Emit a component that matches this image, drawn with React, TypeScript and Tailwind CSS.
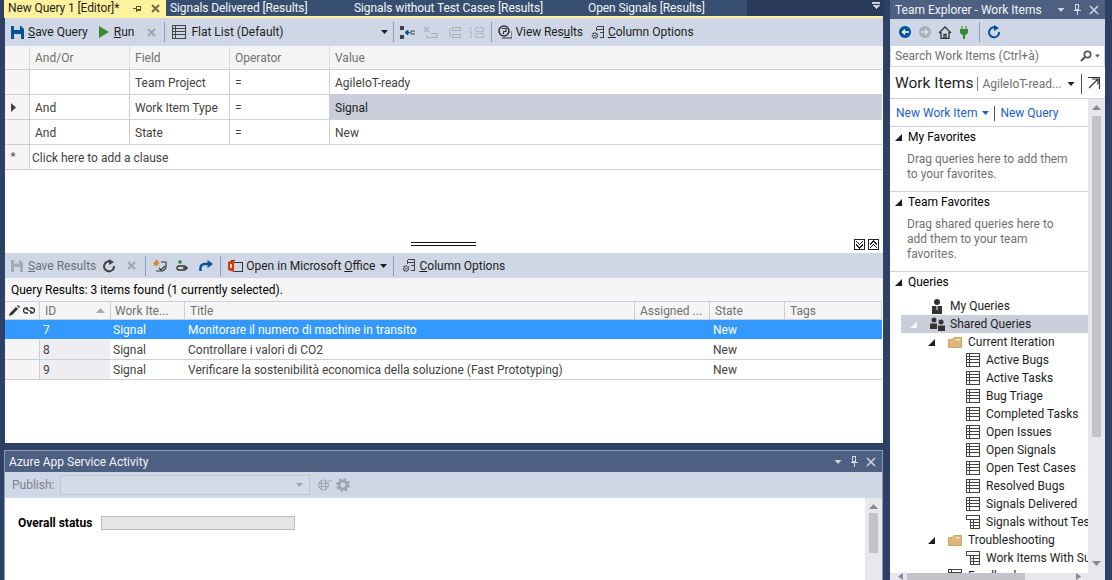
import React from 'react';

const GridIcon = () => (
  <svg width="14" height="14" viewBox="0 0 14 14" shapeRendering="crispEdges" className="shrink-0">
    <path d="M.5.5h13v13H.5zM.5 3.500h13M.5 6.500h13M.5 9.500h13M3.500.5v13" fill="none" stroke="#424242" />
  </svg>
);

const LinkedGridIcon = () => (
  <svg width="14" height="14" viewBox="0 0 14 14" shapeRendering="crispEdges" className="shrink-0">
    <path d="M.5.5h13v13H4.500V4.500H.5zM4.500 4.500h9M4.500 7.500h9M4.500 10.500h9M7.500 4.500v9" fill="none" stroke="#424242" />
  </svg>
);

const Folder = () => (
  <svg width="14" height="12" viewBox="0 0 14 12" className="shrink-0">
    <path d="M.5 3.500V11.500H13.500V1.500H6L4.500 3.500z" fill="#dcb67a" stroke="#c9a667" />
    <path d="M2 4.500h5l1.500-1.500H12v1.500" fill="#f3e3c3" />
  </svg>
);

const Caret = ({ tone = '#1e1e1e' }: { tone?: string }) => (
  <svg width="7" height="7" viewBox="0 0 7 7" className="shrink-0">
    <path d="M7 0v7H0z" fill={tone} />
  </svg>
);

const DownArrow = ({ tone = '#1e1e1e', w = 7 }: { tone?: string; w?: number }) => (
  <svg width={w} height="4" viewBox="0 0 7 4" className="shrink-0">
    <path d="M0 0h7L3.500 4z" fill={tone} />
  </svg>
);

const Sep = () => <div className="mx-[4px] h-[20px] w-px bg-[#8f9bb0]" />;

const ColumnIcon = () => (
  <svg width="14" height="15" viewBox="0 0 14 15" className="shrink-0">
    <path d="M5.500 1.500h7v11h-4M5.500 1.500v4M5.500 4.500h7M8.500 7.500h4" fill="none" stroke="#424242" shapeRendering="crispEdges" />
    <circle cx="4" cy="10.500" r="2.500" fill="none" stroke="#424242" strokeWidth="1.600" strokeDasharray="1.500 0.700" />
    <circle cx="4" cy="10.500" r="0.800" fill="#424242" />
  </svg>
);

const CloseX = ({ tone = '#a0a4ad' }: { tone?: string }) => (
  <svg width="9" height="9" viewBox="0 0 9 9" className="shrink-0">
    <path d="M1 1l7 7M8 1L1 8" stroke={tone} strokeWidth="2" />
  </svg>
);

const Refresh = ({ tone = '#424242' }: { tone?: string }) => (
  <svg width="14" height="14" viewBox="0 0 14 14" className="shrink-0">
    <path d="M8.500 2.600A5 5 0 1 0 12 7" fill="none" stroke={tone} strokeWidth="2" />
    <path d="M7 0l5 3-5 3z" fill={tone} />
  </svg>
);

const Pin = () => (
  <svg width="8" height="11" viewBox="0 0 8 11" shapeRendering="crispEdges" className="shrink-0">
    <path d="M2.500.5h3v5h-3zM.5 6.500h7M4 7v4" fill="none" stroke="#d5dbe8" />
    <path d="M5 1h1v5H5z" fill="#d5dbe8" />
  </svg>
);

const PanelControls = () => (
  <div className="flex items-center gap-[8px]">
    <DownArrow tone="#ced4dd" w={8} />
    <Pin />
    <svg width="10" height="10" viewBox="0 0 10 10" className="shrink-0">
      <path d="M1 1l8 8M9 1L1 9" stroke="#ced4dd" strokeWidth="1.600" />
    </svg>
  </div>
);

const PersonIcon = () => (
  <svg width="14" height="15" viewBox="0 0 14 15" className="shrink-0">
    <circle cx="7" cy="3" r="3" fill="#333" />
    <path d="M2 7h10v8H2z" fill="#333" />
    <path d="M6.500 7h1v4h-1z" fill="#fff" />
  </svg>
);

const PeopleIcon = () => (
  <svg width="15" height="14" viewBox="0 0 15 14" className="shrink-0">
    <circle cx="4" cy="3" r="2.500" fill="#333" />
    <circle cx="11" cy="5" r="2.500" fill="#333" />
    <path d="M0 6.500h7V12H0zM8 8.500h7V14H8z" fill="#333" />
  </svg>
);

const clauses = [
  { andOr: '', field: 'Team Project', value: 'AgileIoT-ready', marker: false, active: false },
  { andOr: 'And', field: 'Work Item Type', value: 'Signal', marker: true, active: true },
  { andOr: 'And', field: 'State', value: 'New', marker: false, active: false },
];

const results = [
  { id: '7', title: 'Monitorare il numero di machine in transito', selected: true },
  { id: '8', title: 'Controllare i valori di CO2', selected: false },
  { id: '9', title: 'Verificare la sostenibilità economica della soluzione (Fast Prototyping)', selected: false },
];

const queries = [
  'Active Bugs',
  'Active Tasks',
  'Bug Triage',
  'Completed Tasks',
  'Open Issues',
  'Open Signals',
  'Open Test Cases',
  'Resolved Bugs',
  'Signals Delivered',
];

function TopTabs() {
  return (
    <div className="flex h-[16px] shrink-0 items-stretch text-[12px] leading-[16px] tracking-[-0.1px] text-[#f4f6f9]">
      <div className="ml-[4px] flex w-[162px] items-center bg-[#fff29d] pl-[4px] text-[#1e1e1e]">
        <span>New Query 1 [Editor]*</span>
        <div className="ml-auto flex items-center gap-[9px] pr-[6px]">
          <svg width="9" height="7" viewBox="0 0 9 7" shapeRendering="crispEdges">
            <path d="M0 3.500h3M3.500.5v6M3.500 1.500h4v4h-4M3.500 4.500h4" fill="none" stroke="#5d5a35" />
          </svg>
          <CloseX tone="#6f6c45" />
        </div>
      </div>
      <div className="flex w-[581px] bg-[#364e6f]">
        <div className="w-[184px] pl-[4px]">Signals Delivered [Results]</div>
        <div className="w-[234px] pl-[4px]">Signals without Test Cases [Results]</div>
        <div className="pl-[4px]">Open Signals [Results]</div>
      </div>
      <div className="flex flex-1 justify-end bg-[#2a3a5a] pr-[4px] pt-[2px]">
        <svg width="8" height="7" viewBox="0 0 8 7" shapeRendering="crispEdges">
          <path d="M0 0h8v1.500H0zM0 3h8L4 7z" fill="#ced4dd" />
        </svg>
      </div>
    </div>
  );
}

function QueryToolbar() {
  return (
    <div className="flex h-[28px] shrink-0 items-center bg-[#cfd6e5] pl-[6px] text-[12px] text-[#1e1e1e]">
      <svg width="13" height="13" viewBox="0 0 13 13" className="shrink-0">
        <path d="M0 0h10l3 3v10H0z" fill="#00539c" />
        <path d="M3 0h6v4H3z" fill="#cfd6e5" />
        <path d="M3 8h7v5H3z" fill="#cfd6e5" />
      </svg>
      <span className="ml-[4px]"><u>S</u>ave Query</span>
      <svg width="10" height="12" viewBox="0 0 10 12" className="ml-[11px] shrink-0">
        <path d="M0 0l10 6-10 6z" fill="#388a34" />
      </svg>
      <span className="ml-[5px]"><u>R</u>un</span>
      <div className="ml-[13px]"><CloseX /></div>
      <div className="ml-[4px]"><Sep /></div>
      <div className="ml-[3px]"><GridIcon /></div>
      <span className="ml-[5px]">Flat List (Default)</span>
      <div className="ml-[97px]"><DownArrow /></div>
      <div className="ml-[1px]"><Sep /></div>
      <svg width="16" height="13" viewBox="0 0 16 13" className="ml-[2px] shrink-0">
        <path d="M0 0h4v4H0zM0 9h4v4H0z" fill="#424242" />
        <path d="M5 6.500h5M5 6.500l3-2.500v5z" fill="#00539c" stroke="#00539c" />
        <path d="M11 5h4M11 8h4M11 5v3" fill="none" stroke="#424242" />
      </svg>
      <svg width="14" height="13" viewBox="0 0 14 13" className="ml-[8px] shrink-0">
        <path d="M0 1l5 5M5 1L0 6M7 7.500h6v4H3V9" fill="none" stroke="#a9afba" strokeWidth="1.200" />
      </svg>
      <svg width="14" height="13" viewBox="0 0 14 13" className="ml-[9px] shrink-0">
        <path d="M5.500 1.500h8v3h-8zM5.500 8.500h8v3h-8zM3 2v9" fill="none" stroke="#a9afba" />
      </svg>
      <svg width="15" height="13" viewBox="0 0 15 13" className="ml-[8px] shrink-0">
        <path d="M6.500 1.500h8v4h-8zM6.500 7.500h8v4h-8zM2 1v11" fill="none" stroke="#a9afba" strokeDasharray="3 1" />
      </svg>
      <div className="ml-[3px]"><Sep /></div>
      <svg width="14" height="14" viewBox="0 0 14 14" className="ml-[2px] shrink-0">
        <circle cx="6" cy="6" r="5" fill="none" stroke="#333" strokeWidth="1.600" />
        <path d="M4 3.500h4v3H5.500V9" fill="none" stroke="#333" strokeWidth="1.200" />
        <path d="M4 13h10V6" fill="none" stroke="#333" />
      </svg>
      <span className="ml-[4px] tracking-[-0.1px]">View Res<u>u</u>lts</span>
      <div className="ml-[8px]"><ColumnIcon /></div>
      <span className="ml-[3px]"><u>C</u>olumn Options</span>
    </div>
  );
}

function ClauseGrid() {
  return (
    <div className="mr-[1px] shrink-0 text-[12px] text-[#424242]">
      <div className="flex h-[24px] items-center border-b border-[#cccedb] bg-[#f5f5f5] text-[#717171]">
        <div className="h-full w-[25px] shrink-0 border-r border-[#dcdce4]" />
        <div className="flex h-full w-[100px] shrink-0 items-center border-r border-[#dcdce4] pl-[5px]">And/Or</div>
        <div className="flex h-full w-[100px] shrink-0 items-center border-r border-[#dcdce4] pl-[5px]">Field</div>
        <div className="flex h-full w-[100px] shrink-0 items-center border-r border-[#dcdce4] pl-[5px]">Operator</div>
        <div className="pl-[5px]">Value</div>
      </div>
      {clauses.map((c) => (
        <div key={c.field} className="flex h-[25px] items-stretch border-b border-[#cccedb]">
          <div className="flex w-[25px] shrink-0 items-center justify-center border-r border-[#cccedb] bg-[#f5f5f5] pr-[8px]">
            {c.marker && (
              <svg width="5" height="9" viewBox="0 0 5 9">
                <path d="M0 0l5 4.500-5 4.500z" fill="#424242" />
              </svg>
            )}
          </div>
          <div className="flex w-[100px] shrink-0 items-center border-r border-[#cccedb] pl-[5px] pt-[2px]">{c.andOr}</div>
          <div className="flex w-[100px] shrink-0 items-center border-r border-[#cccedb] pl-[5px] pt-[2px]">{c.field}</div>
          <div className="flex w-[100px] shrink-0 items-center border-r border-[#cccedb] pl-[5px] pt-[2px]">=</div>
          <div className={`flex flex-1 items-center pl-[5px] pt-[2px] ${c.active ? 'bg-[#cacdda] text-[#1e1e1e]' : ''}`}>{c.value}</div>
        </div>
      ))}
      <div className="flex h-[25px] items-stretch border-b border-[#cccedb]">
        <div className="flex w-[25px] shrink-0 items-center justify-center border-r border-[#cccedb] bg-[#f5f5f5] pr-[8px] text-[11px] font-bold text-[#555]">*</div>
        <div className="flex items-center pl-[2px] pt-[2px]">Click here to add a clause</div>
      </div>
    </div>
  );
}

function Splitter() {
  return (
    <div className="flex h-[83px] shrink-0 items-end pb-[3px] pl-[406px] pr-[4px]">
      <div className="mb-[4px] h-[4px] w-[65px] border-y border-[#111]" />
      <div className="ml-auto flex gap-[3px]">
        {['M1.500 1.500l3 3 3-3M1.500 4.500l3 3 3-3', 'M1.500 4.500l3-3 3 3M1.500 7.500l3-3 3 3'].map((d) => (
          <svg key={d} width="11" height="11" viewBox="0 0 9 9" shapeRendering="crispEdges">
            <rect x=".5" y=".5" width="8" height="8" fill="#fff" stroke="#222" />
            <path d={d} fill="none" stroke="#222" />
          </svg>
        ))}
      </div>
    </div>
  );
}

function ResultsToolbar() {
  return (
    <div className="flex h-[25px] shrink-0 items-center bg-[#cfd6e5] pl-[6px] text-[12px] text-[#1e1e1e]">
      <svg width="12" height="12" viewBox="0 0 12 12" className="shrink-0">
        <path d="M0 0h9l3 3v9H0z" fill="#a5abb6" />
        <path d="M3 0h5v3.500H3zM3 7h6v5H3z" fill="#cfd6e5" />
      </svg>
      <span className="ml-[5px] text-[#6d6f76]"><u>S</u>ave Results</span>
      <div className="ml-[6px]"><Refresh /></div>
      <div className="ml-[11px]"><CloseX /></div>
      <div className="ml-[5px]"><Sep /></div>
      <svg width="14" height="15" viewBox="0 0 14 15" className="ml-[3px] shrink-0">
        <path d="M3 1l1 2 2-1-1 2 2 1-2 1 1 2-2-1-1 2-1-2-2 1 1-2-1-1 2-1z" fill="#d08a2e" />
        <path d="M3 13h7l3-3V4H8M6 10l2 2 4-4" fill="none" stroke="#333" strokeWidth="1.100" />
      </svg>
      <svg width="14" height="13" viewBox="0 0 14 13" className="ml-[9px] shrink-0">
        <path d="M2 3h4M4 1v4" stroke="#388a34" strokeWidth="1.600" />
        <path d="M3 7h5a2 2 0 0 1 0 4H3a2 2 0 0 1 0-4zM7 9h5" fill="none" stroke="#333" strokeWidth="1.400" />
      </svg>
      <svg width="14" height="12" viewBox="0 0 14 12" className="ml-[9px] shrink-0">
        <path d="M1.500 11V8a4 4 0 0 1 4-4H10" fill="none" stroke="#00539c" strokeWidth="2.400" />
        <path d="M8.500 0L14 4l-5.500 4z" fill="#00539c" />
      </svg>
      <div className="ml-[3px]"><Sep /></div>
      <svg width="15" height="14" viewBox="0 0 15 14" className="ml-[3px] shrink-0">
        <path d="M3.500 3.500h11v9h-9" fill="none" stroke="#333" shapeRendering="crispEdges" />
        <path d="M3 1h4v1H3z" fill="#333" />
        <path d="M0 3l6-2v12l-6-2z" fill="#d83b01" />
        <path d="M2 5h2v4H2z" fill="#f6d9cd" />
      </svg>
      <span className="ml-[3px]">Open in Microsoft <u>O</u>ffice</span>
      <div className="ml-[5px]"><DownArrow /></div>
      <div className="ml-[2px]"><Sep /></div>
      <div className="ml-[4px]"><ColumnIcon /></div>
      <span className="ml-[3px]"><u>C</u>olumn Options</span>
    </div>
  );
}

function ResultsGrid() {
  return (
    <div className="mr-[1px] shrink-0 text-[12px] text-[#424242]">
      <div className="flex h-[19px] items-stretch border-y border-[#cccedb] bg-[#f5f5f5] text-[#717171]">
        <div className="flex w-[35px] shrink-0 items-center gap-[3px] border-r border-[#cccedb] pl-[4px]">
          <svg width="11" height="11" viewBox="0 0 11 11">
            <path d="M0 11l1-3 6-6 2 2-6 6zM8 1l1-1 2 2-1 1z" fill="#333" />
          </svg>
          <svg width="12" height="7" viewBox="0 0 12 7">
            <path d="M5 1H3a2.500 2.500 0 0 0 0 5h2M7 1h2a2.500 2.500 0 0 1 0 5H7M3 2l6 3" fill="none" stroke="#333" strokeWidth="1.300" />
          </svg>
        </div>
        <div className="flex w-[71px] shrink-0 items-center border-r border-[#cccedb] pl-[5px]">
          ID
          <svg width="9" height="5" viewBox="0 0 9 5" className="ml-auto mr-[5px]">
            <path d="M0 5l4.500-5L9 5z" fill="#a9a9ad" />
          </svg>
        </div>
        <div className="flex w-[74px] shrink-0 items-center border-r border-[#cccedb] pl-[4px]">Work Ite...</div>
        <div className="flex w-[450px] shrink-0 items-center border-r border-[#cccedb] pl-[5px]">Title</div>
        <div className="flex w-[75px] shrink-0 items-center border-r border-[#cccedb] pl-[5px]">Assigned ...</div>
        <div className="flex w-[75px] shrink-0 items-center border-r border-[#cccedb] pl-[5px]">State</div>
        <div className="flex flex-1 items-center border-r border-[#cccedb] pl-[5px]">Tags</div>
      </div>
      {results.map((r) => (
        <div
          key={r.id}
          className={`flex h-[20px] items-stretch border-b ${r.selected ? 'border-[#f0f0f4] bg-[#3399ff] text-white' : 'border-[#cccedb]'}`}
        >
          <div className={`w-[35px] shrink-0 border-r ${r.selected ? 'border-[#3399ff]' : 'border-[#cccedb] bg-[#f5f5f5]'}`} />
          <div className={`flex w-[70px] shrink-0 items-center pl-[3px] ${r.selected ? '' : 'bg-[#eeeef2]'}`}>{r.id}</div>
          <div className="flex w-[74px] shrink-0 items-center pl-[3px]">Signal</div>
          <div className="flex w-[525px] shrink-0 items-center pl-[4px]">{r.title}</div>
          <div className="flex items-center pl-[4px]">New</div>
        </div>
      ))}
    </div>
  );
}

function ActivityPanel() {
  return (
    <div className="flex min-h-0 flex-1 flex-col border-x border-t border-[#8b9ab6] bg-white">
      <div className="flex h-[21px] shrink-0 items-center justify-between bg-[#4d6082] pl-[4px] pr-[6px] text-[12px] text-[#f2f4f8]">
        <span>Azure App Service Activity</span>
        <PanelControls />
      </div>
      <div className="flex h-[26px] shrink-0 items-center bg-[#cfd6e5] pl-[7px] text-[12px] text-[#7f838c]">
        <span>Publish:</span>
        <div className="ml-[6px] flex h-[20px] w-[250px] items-center justify-end border border-[#bec6d6] bg-[#d4dae6] pr-[6px]">
          <DownArrow tone="#9ea5b2" />
        </div>
        <svg width="14" height="12" viewBox="0 0 14 12" className="ml-[8px]">
          <circle cx="5.500" cy="6" r="5" fill="none" stroke="#9ea5b2" />
          <path d="M3.500 1v10M7.500 1v10M.5 4.500h10M.5 7.500h10M10 3l2-2 2 2" fill="none" stroke="#9ea5b2" />
        </svg>
        <svg width="14" height="14" viewBox="0 0 14 14" className="ml-[4px]">
          <circle cx="7" cy="7" r="4" fill="none" stroke="#9ea5b2" strokeWidth="3" />
          <circle cx="7" cy="7" r="6" fill="none" stroke="#9ea5b2" strokeWidth="2" strokeDasharray="2.400 2.300" />
        </svg>
      </div>
      <div className="flex min-h-0 flex-1">
        <div className="flex flex-1 items-start pl-[13px] pt-[18px]">
          <span className="text-[12px] font-bold leading-[14px] text-black">Overall status</span>
          <div className="ml-[9px] h-[14px] w-[194px] border border-[#bcbcbc] bg-[#e6e6e6]" />
        </div>
        <div className="flex w-[17px] shrink-0 flex-col items-center bg-[#e8e8ec] pt-[6px]">
          <svg width="9" height="5" viewBox="0 0 9 5" className="shrink-0">
            <path d="M0 5l4.500-5L9 5z" fill="#868999" />
          </svg>
          <div className="mt-[4px] h-[40px] w-[9px] shrink-0 bg-[#c2c3c9]" />
        </div>
      </div>
    </div>
  );
}

function Section({ title, note }: { title: string; note: string[] }) {
  return (
    <div className="shrink-0 border-b border-[#cccedb]">
      <div className="flex h-[20px] items-center">
        <div className="ml-[5px]"><Caret /></div>
        <span className="ml-[6px] text-[12px] text-black">{title}</span>
      </div>
      <div className="pb-[9px] pl-[17px] pt-[5px] text-[12px] leading-[15px] text-[#717171]">
        {note.map((line) => (
          <div key={line}>{line}</div>
        ))}
      </div>
    </div>
  );
}

function TreeRow({ pad, icon, label, caret, selected }: { pad: string; icon: React.ReactNode; label: string; caret?: React.ReactNode; selected?: boolean }) {
  return (
    <div className={`flex h-[18px] shrink-0 items-center whitespace-nowrap ${pad} ${selected ? 'ml-[11px] bg-[#cacdda]' : ''}`}>
      <div className="w-[20px] shrink-0">{caret}</div>
      <div className="flex w-[20px] shrink-0">{icon}</div>
      <span className="text-[12px] text-[#1e1e1e]">{label}</span>
    </div>
  );
}

function TeamExplorer() {
  return (
    <div className="ml-[6px] flex h-full w-[215px] shrink-0 flex-col">
      <div className="flex h-[19px] shrink-0 items-center justify-between bg-[#4d6082] pl-[5px] pr-[6px] text-[12px] text-[#f2f4f8]">
        <span>Team Explorer - Work Items</span>
        <PanelControls />
      </div>
      <div className="flex h-[26px] shrink-0 items-center bg-[#cfd6e5] pl-[9px]">
        <svg width="12" height="12" viewBox="0 0 12 12">
          <circle cx="6" cy="6" r="6" fill="#00539c" />
          <path d="M10 6H4M6 3.500L3.500 6 6 8.500" fill="none" stroke="#fff" strokeWidth="1.500" />
        </svg>
        <svg width="12" height="12" viewBox="0 0 12 12" className="ml-[8px]">
          <circle cx="6" cy="6" r="6" fill="#a9afba" />
          <path d="M2 6h6M6 3.500L8.500 6 6 8.500" fill="none" stroke="#dfe3ea" strokeWidth="1.500" />
        </svg>
        <svg width="14" height="13" viewBox="0 0 14 13" className="ml-[7px]">
          <path d="M1 7l6-6 6 6M3 6v6.500h8V6M6 12.500V8.500h2v4" fill="none" stroke="#333" strokeWidth="1.300" />
        </svg>
        <svg width="8" height="13" viewBox="0 0 8 13" className="ml-[8px]">
          <path d="M1.500 0h1v3h-1zM5.500 0h1v3h-1zM0 3h8v4L5 9.500V13H3V9.500L0 7z" fill="#388a34" />
        </svg>
        <div className="ml-[7px]"><Sep /></div>
        <div className="ml-[3px]"><Refresh tone="#00539c" /></div>
      </div>
      <div className="flex h-[22px] shrink-0 items-center justify-between border border-[#cfd6e5] bg-white px-[4px] text-[12px] text-[#717171]">
        <span>Search Work Items (Ctrl+à)</span>
        <div className="flex items-center gap-[3px]">
          <svg width="12" height="12" viewBox="0 0 12 12">
            <circle cx="7.500" cy="4.500" r="3.200" fill="none" stroke="#555" strokeWidth="1.700" />
            <path d="M5 7l-4 4" stroke="#555" strokeWidth="2.200" />
          </svg>
          <DownArrow tone="#555" w={5} />
        </div>
      </div>
      <div className="flex h-[32px] shrink-0 items-center border-b border-[#cccedb] bg-white pl-[5px] pt-[2px]">
        <span className="text-[15.500px] text-[#1e1e1e]">Work Items</span>
        <span className="ml-[4px] h-[14px] w-px bg-[#6f87a8]" />
        <span className="ml-[4px] text-[12px] text-[#717171]">AgileIoT-read...</span>
        <div className="ml-[5px]"><DownArrow w={8} /></div>
        <span className="ml-[6px] h-[20px] w-px bg-[#555]" />
        <svg width="13" height="13" viewBox="0 0 13 13" className="ml-[5px]">
          <path d="M1 .5h11.500V12M2 11l9-9M5 2h6v6" fill="none" stroke="#333" strokeWidth="1.200" />
        </svg>
      </div>
      <div className="flex min-h-0 flex-1 bg-white">
        <div className="flex min-w-0 flex-1 flex-col overflow-hidden">
          <div className="flex h-[28px] shrink-0 items-center border-b border-[#cccedb] pl-[6px] pt-[1px] text-[12px] text-[#1a5fcc]">
            <span>New Work Item</span>
            <div className="ml-[5px]"><DownArrow tone="#1a5fcc" /></div>
            <span className="ml-[5px] h-[15px] w-px bg-[#555]" />
            <span className="ml-[5px]">New Query</span>
          </div>
          <Section title="My Favorites" note={['Drag queries here to add them', 'to your favorites.']} />
          <Section title="Team Favorites" note={['Drag shared queries here to', 'add them to your team', 'favorites.']} />
          <div className="mb-[5px] flex h-[20px] shrink-0 items-center">
            <div className="ml-[5px]"><Caret /></div>
            <span className="ml-[6px] text-[12px] text-black">Queries</span>
          </div>
          <TreeRow pad="pl-[20px]" icon={<PersonIcon />} label="My Queries" />
          <TreeRow pad="pl-[9px]" selected caret={<Caret tone="#f4f4f6" />} icon={<PeopleIcon />} label="Shared Queries" />
          <TreeRow pad="pl-[38px]" caret={<Caret />} icon={<Folder />} label="Current Iteration" />
          {queries.map((q) => (
            <TreeRow key={q} pad="pl-[56px]" icon={<GridIcon />} label={q} />
          ))}
          <TreeRow pad="pl-[56px]" icon={<LinkedGridIcon />} label="Signals without Test Cases" />
          <TreeRow pad="pl-[38px]" caret={<Caret />} icon={<Folder />} label="Troubleshooting" />
          <TreeRow pad="pl-[56px]" icon={<LinkedGridIcon />} label="Work Items With Summary" />
          <TreeRow pad="pl-[38px]" icon={<GridIcon />} label="Feedback" />
        </div>
        <div className="flex w-[17px] shrink-0 flex-col items-center bg-[#e8e8ec] pt-[6px]">
          <svg width="9" height="5" viewBox="0 0 9 5" className="shrink-0">
            <path d="M0 5l4.500-5L9 5z" fill="#868999" />
          </svg>
          <div className="mt-[6px] h-[321px] w-[9px] shrink-0 bg-[#c2c3c9]" />
          <svg width="9" height="5" viewBox="0 0 9 5" className="mb-[7px] mt-auto shrink-0">
            <path d="M0 0h9L4.500 5z" fill="#868999" />
          </svg>
        </div>
      </div>
      <div className="flex h-[7px] shrink-0 items-center bg-[#e8e8ec] pl-[8px] pr-[24px]">
        <svg width="5" height="7" viewBox="0 0 5 7"><path d="M5 0v7L0 3.500z" fill="#868999" /></svg>
        <div className="ml-[4px] h-full w-[118px] bg-[#c2c3c9]" />
        <svg width="5" height="7" viewBox="0 0 5 7" className="ml-auto"><path d="M0 0v7l5-3.500z" fill="#868999" /></svg>
      </div>
    </div>
  );
}

export default function App() {
  return (
    <div className="flex h-[580px] w-[1112px] overflow-hidden bg-[#2e4066] font-['Roboto','Liberation_Sans',sans-serif]">
      <div className="flex h-full w-[884px] shrink-0 flex-col">
        <TopTabs />
        <div className="ml-[4px] mr-[1px] h-[2px] shrink-0 bg-[#fff29d]" />
        <div className="ml-[5px] mr-[1px] flex h-[425px] shrink-0 flex-col bg-white">
          <QueryToolbar />
          <ClauseGrid />
          <Splitter />
          <ResultsToolbar />
          <div className="flex h-[23px] shrink-0 items-center bg-[#f5f5f5] pl-[6px] text-[12px] text-black">
            Query Results: 3 items found (1 currently selected).
          </div>
          <ResultsGrid />
        </div>
        <div className="ml-[4px] mr-[1px] mt-[7px] flex min-h-0 flex-1 flex-col">
          <ActivityPanel />
        </div>
      </div>
      <TeamExplorer />
    </div>
  );
}
